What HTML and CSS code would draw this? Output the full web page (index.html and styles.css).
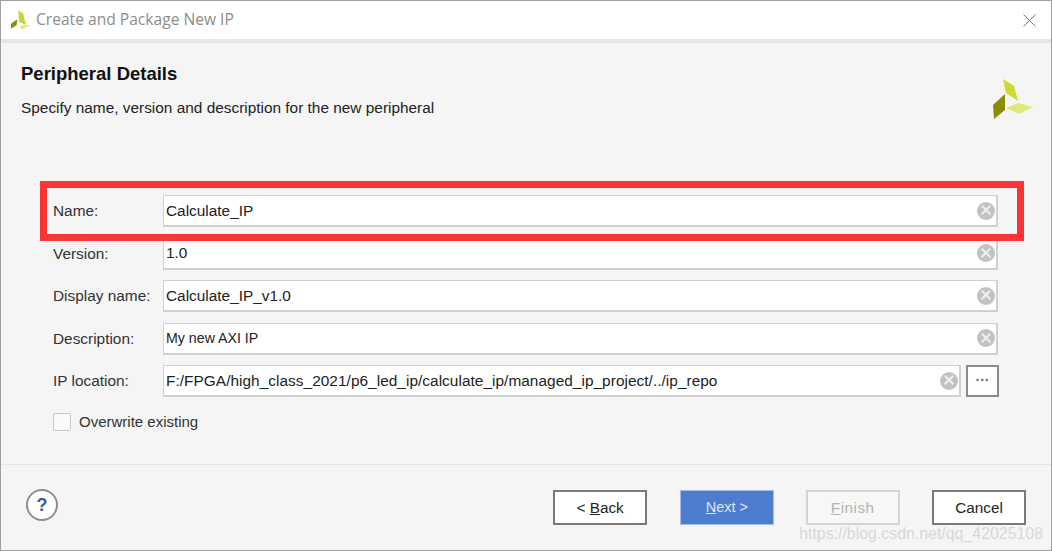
FILE: index.html
```html
<!DOCTYPE html>
<html lang="en">
<head>
<meta charset="utf-8">
<title>Create and Package New IP</title>
<link rel="stylesheet" href="styles.css">
</head>
<body>
<div class="window">
  <header class="titlebar">
    <svg class="logo-small" viewBox="0 0 21 20"><polygon points="8.300,0.300 13.300,3.700 16,15 9,11.700" fill="#c9d43a"/><polygon points="7.300,9.300 1,13.700 1,18.700 6.700,15" fill="#8c8c0a"/><polygon points="9.300,16 16,15 20.700,15 12,19.500" fill="#e3e878"/></svg>
    <span class="title">Create and Package New IP</span>
    <svg class="close" viewBox="0 0 13 13"><path d="M.5.500l12 12M12.500.500l-12 12" stroke="#777" stroke-width="1" fill="none"/></svg>
  </header>
  <section class="heading">
    <div>
      <h1>Peripheral Details</h1>
      <p>Specify name, version and description for the new peripheral</p>
    </div>
    <svg class="logo" viewBox="0 0 40 40"><polygon points="10,0 21,7 25,22 13,14" fill="#cfd92f"/><polygon points="12,15 0,26 1,40 12,31" fill="#8a8c05"/><polygon points="13,29 25,24 40,28 26,35" fill="#e2e875"/></svg>
  </section>
  <form class="form">
    <label class="lbl">Name:</label>
    <div class="field"><span>Calculate_IP</span><i class="clear"></i></div>
    <label class="lbl">Version:</label>
    <div class="field"><span>1.0</span><i class="clear"></i></div>
    <label class="lbl">Display name:</label>
    <div class="field"><span>Calculate_IP_v1.0</span><i class="clear"></i></div>
    <label class="lbl">Description:</label>
    <div class="field"><span class="narrow">My new AXI IP</span><i class="clear"></i></div>
    <label class="lbl">IP location:</label>
    <div class="loc">
      <div class="field"><span class="path">F:/FPGA/high_class_2021/p6_led_ip/calculate_ip/managed_ip_project/../ip_repo</span><i class="clear"></i></div>
      <div class="browse">···</div>
    </div>
    <div class="check"><i class="box"></i><span>Overwrite existing</span></div>
  </form>
  <footer class="footer">
    <div class="help">?</div>
    <div class="buttons">
      <div class="btn">&lt; <u>B</u>ack</div>
      <div class="btn primary"><u>N</u>ext &gt;</div>
      <div class="btn disabled"><u>F</u>inish</div>
      <div class="btn">Cancel</div>
    </div>
  </footer>
  <div class="highlight"></div>
  <div class="watermark">https://blog.csdn.net/qq_42025108</div>
</div>
</body>
</html>
```
FILE: styles.css
```css
* { box-sizing: border-box; }
html, body { margin: 0; padding: 0; }
body { width: 1052px; height: 551px; overflow: hidden; font-family: "Liberation Sans", Arial, sans-serif; font-size: 15.400px; color: #222; }
.window { position: relative; width: 1052px; height: 551px; background: #f5f5f5; border: 1px solid #a0a0a0; display: flex; flex-direction: column; }
.titlebar { height: 42px; flex: none; background: #fff; border-bottom: 4px solid #e6e6e6; display: flex; align-items: center; padding: 0 15px 0 9px; }
.logo-small { width: 21px; height: 20px; margin-bottom: 1px; }
.title { margin-left: 5px; font-family: "Open Sans", "Noto Sans", sans-serif; font-size: 15.600px; color: #8c8c8c; flex: 1; position: relative; top: -1px; }
.close { width: 13px; height: 13px; }
.heading { height: 138px; flex: none; padding: 21px 18px 0 20px; display: flex; justify-content: space-between; align-items: flex-start; }
h1 { margin: 0; font-size: 18.500px; line-height: 20px; font-weight: 700; color: #111; }
.heading p { margin: 15px 0 0; font-size: 15.400px; line-height: 18px; color: #222; }
.logo { width: 40px; height: 40px; margin-top: 15px; }
.form { flex: none; height: 283px; padding: 14px 53px 0 52px; display: grid; grid-template-columns: 110px 835px; grid-auto-rows: 32px; row-gap: 10.500px; align-items: center; align-content: start; }
.lbl { color: #333; }
.field { height: 32px; background: #fff; border: 1px solid #d0d0d0; border-width: 1px 2px 2px 1px; display: flex; align-items: center; justify-content: space-between; padding: 0 1px 0 2px; color: #222; flex: 1; min-width: 0; }
.narrow { font-size: 14.200px; }
.path { letter-spacing: .04px; }
.clear { width: 18px; height: 18px; border-radius: 50%; background: #c2c2c2; position: relative; flex: none; }
.clear::before, .clear::after { content: ""; position: absolute; left: 3px; top: 7.800px; width: 12px; height: 2.400px; background: #f0f0f0; transform: rotate(45deg); }
.clear::after { transform: rotate(-45deg); }
.loc { display: flex; gap: 5px; margin-right: -1px; }
.browse { width: 33px; height: 32px; flex: none; background: #fff; border: 2px solid #8a8a8a; text-align: center; font-size: 14px; line-height: 26px; font-weight: 700; color: #666; }
.check { grid-column: 1 / 3; display: flex; align-items: center; height: 18px; color: #333; font-size: 15px; position: relative; top: -2px; }
.box { width: 18px; height: 18px; background: #fafafa; border: 1px solid #c8c8c8; border-radius: 2px; margin-right: 8px; }
.footer { flex: 1; border-top: 1px solid #e4e4e4; display: flex; justify-content: space-between; padding: 25px 25px 0 25px; }
.help { width: 32px; height: 32px; margin-top: -1px; border-radius: 50%; background: #fff; border: 2px solid #8e8e8e; color: #3a5a94; font-weight: 700; font-size: 18px; line-height: 28px; text-align: center; }
.buttons { display: flex; gap: 32.300px; }
.btn { width: 94px; height: 35px; background: #fff; border: 2px solid #7a7a7a; text-align: center; line-height: 31px; font-size: 15.300px; color: #222; }
.primary { background: #4e7cce; border-color: #a5bdea; border-width: 1px; line-height: 33px; color: #dfe7f7; font-size: 14.500px; margin: 0 -.5px 0 .5px; }
.disabled { background: #f7f7f7; border-color: #d4d4d4; color: #b4b4b4; letter-spacing: .5px; }
.highlight { position: absolute; left: 39px; top: 180px; width: 984px; height: 60px; border: 7px solid #fb3535; pointer-events: none; }
.watermark { position: absolute; right: 8px; bottom: 7px; font-size: 15.900px; color: rgba(205,205,205,.75); }
```
